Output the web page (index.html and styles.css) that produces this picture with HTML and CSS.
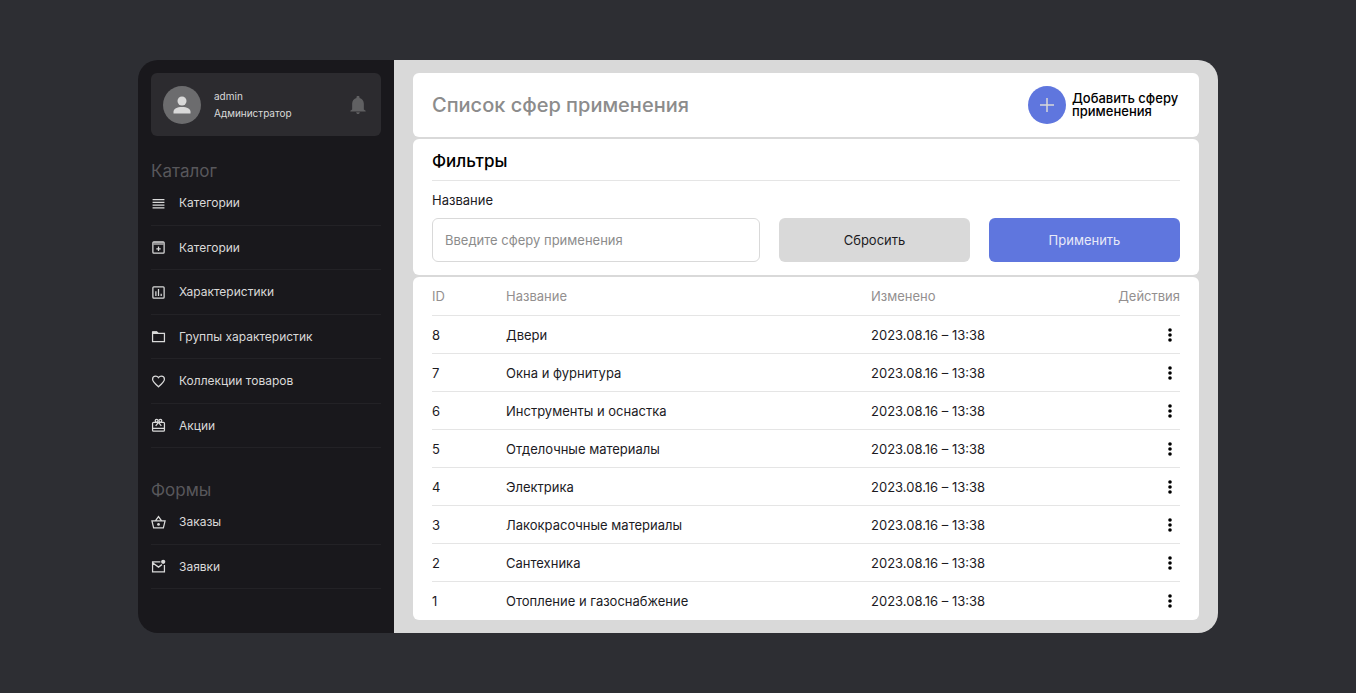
FILE: index.html
```html
<!DOCTYPE html>
<html lang="ru">
<head>
<meta charset="utf-8">
<meta name="viewport" content="width=device-width, initial-scale=1">
<title>Список сфер применения</title>
<link rel="stylesheet" href="styles.css">
</head>
<body>
<div class="app">
  <aside class="sidebar">
    <div class="profile">
      <span class="avatar">
        <svg class="avatar-icon" viewBox="0 0 18 18" aria-hidden="true"><circle cx="9" cy="5" r="4.500"/><path d="M.5 17.500v-1.700C.5 12.800 4 11 9 11s8.500 1.800 8.500 4.800v1.700z"/></svg>
      </span>
      <div class="profile-text">
        <span>admin</span>
        <span>Администратор</span>
      </div>
      <button class="bell" type="button" aria-label="Уведомления">
        <svg class="bell-icon" viewBox="3 2 18 20" aria-hidden="true"><path d="M12 22c1.100 0 2-.9 2-2h-4c0 1.100.9 2 2 2zm6.500-5v-6.500c0-3.300-2-5.800-4.800-6.400V3.500a1.700 1.700 0 0 0-3.400 0v.6C7.500 4.700 5.500 7.200 5.500 10.500V17L3.500 18.500V19.200h17v-.7z"/></svg>
      </button>
    </div>
    <nav class="nav">
      <section class="group">
        <h2 class="group-title">Каталог</h2>
        <ul class="group-list">
          <li class="nav-item"><a class="nav-link" href="#categories"><svg class="icon" viewBox="0 0 24 24" aria-hidden="true"><path d="M2.500 5.600h19M2.500 10h19M2.500 14.400h19M2.500 18.800h19"/></svg>Категории</a></li>
          <li class="nav-item"><a class="nav-link" href="#archive"><svg class="icon" viewBox="0 0 24 24" aria-hidden="true"><rect x="3" y="3" width="18" height="18" rx="1.500"/><path class="solid" d="M4 3h16v5H4z" opacity=".6"/><path d="M12 10.500v7M8.500 14h7"/></svg>Категории</a></li>
          <li class="nav-item"><a class="nav-link" href="#features"><svg class="icon" viewBox="0 0 24 24" aria-hidden="true"><rect x="3" y="3" width="18" height="18" rx="1.500"/><path d="M7.800 10v7.500M12 6.500v11M16.300 14v3.500"/></svg>Характеристики</a></li>
          <li class="nav-item"><a class="nav-link" href="#feature-groups"><svg class="icon" viewBox="0 0 24 24" aria-hidden="true"><path d="M3 4.500h6l2.500 2.500H21.500v13h-19v-15z"/><path class="solid" d="M2 4h7.500l2.500 2.500V8H2z"/></svg>Группы характеристик</a></li>
          <li class="nav-item"><a class="nav-link" href="#collections"><svg class="icon" viewBox="0 0 24 24" aria-hidden="true"><path d="M12 20.500C6 15.200 2.500 12.200 2.500 8.400A5 5 0 0 1 7.500 3.500c1.800 0 3.500.9 4.500 2.400 1-1.500 2.700-2.400 4.500-2.400a5 5 0 0 1 5 4.900c0 3.800-3.500 6.800-9.500 12.100z"/></svg>Коллекции товаров</a></li>
          <li class="nav-item"><a class="nav-link" href="#promo"><svg class="icon" viewBox="0 0 24 24" aria-hidden="true"><rect x="2.500" y="7" width="19" height="14" rx="1.500"/><path d="M2.500 16.500h19M12 7l-4.500 5.500M12 7l4.500 5.500"/><circle cx="9" cy="4.500" r="2.300"/><circle cx="15" cy="4.500" r="2.300"/></svg>Акции</a></li>
        </ul>
      </section>
      <section class="group">
        <h2 class="group-title group-title-next">Формы</h2>
        <ul class="group-list">
          <li class="nav-item"><a class="nav-link" href="#orders"><svg class="icon" viewBox="0 0 24 24" aria-hidden="true"><path d="M1.500 9.500h21L19.800 20.500H4.200zM7 9.500l5-7 5 7"/><circle class="solid" cx="12" cy="15" r="2.200"/></svg>Заказы</a></li>
          <li class="nav-item"><a class="nav-link" href="#requests"><svg class="icon" viewBox="0 0 24 24" aria-hidden="true"><path d="M15 4.500H2.500v16h19V9.500M3 6.500l9 6.500 5.500-4"/><circle class="solid" cx="19.500" cy="4.500" r="3.400"/></svg>Заявки</a></li>
        </ul>
      </section>
    </nav>
  </aside>
  <main class="main">
    <header class="card page-head">
      <h1 class="page-title">Список сфер применения</h1>
      <button class="add" type="button">
        <span class="add-circle"><svg class="add-icon" viewBox="0 0 16 16" aria-hidden="true"><path d="M8 1v14M1 8h14"/></svg></span>
        <span class="add-label">Добавить сферу применения</span>
      </button>
    </header>
    <form class="card filters">
      <h2 class="filters-title">Фильтры</h2>
      <label class="field-label" for="scope">Название</label>
      <div class="filters-row">
        <input class="field" id="scope" type="text" placeholder="Введите сферу применения">
        <button class="btn btn-reset" type="reset">Сбросить</button>
        <button class="btn btn-apply" type="submit">Применить</button>
      </div>
    </form>
    <section class="card list">
      <table class="table">
        <thead>
          <tr><th class="col-id">ID</th><th class="col-name">Название</th><th>Изменено</th><th class="col-actions">Действия</th></tr>
        </thead>
        <tbody>
          <tr><td>8</td><td>Двери</td><td>2023.08.16 – 13:38</td><td class="col-actions"><button class="more" type="button" aria-label="Действия"><svg class="dots" viewBox="0 0 4 14" aria-hidden="true"><circle cx="2" cy="2" r="1.800"/><circle cx="2" cy="7" r="1.800"/><circle cx="2" cy="12" r="1.800"/></svg></button></td></tr>
          <tr><td>7</td><td>Окна и фурнитура</td><td>2023.08.16 – 13:38</td><td class="col-actions"><button class="more" type="button" aria-label="Действия"><svg class="dots" viewBox="0 0 4 14" aria-hidden="true"><circle cx="2" cy="2" r="1.800"/><circle cx="2" cy="7" r="1.800"/><circle cx="2" cy="12" r="1.800"/></svg></button></td></tr>
          <tr><td>6</td><td>Инструменты и оснастка</td><td>2023.08.16 – 13:38</td><td class="col-actions"><button class="more" type="button" aria-label="Действия"><svg class="dots" viewBox="0 0 4 14" aria-hidden="true"><circle cx="2" cy="2" r="1.800"/><circle cx="2" cy="7" r="1.800"/><circle cx="2" cy="12" r="1.800"/></svg></button></td></tr>
          <tr><td>5</td><td>Отделочные материалы</td><td>2023.08.16 – 13:38</td><td class="col-actions"><button class="more" type="button" aria-label="Действия"><svg class="dots" viewBox="0 0 4 14" aria-hidden="true"><circle cx="2" cy="2" r="1.800"/><circle cx="2" cy="7" r="1.800"/><circle cx="2" cy="12" r="1.800"/></svg></button></td></tr>
          <tr><td>4</td><td>Электрика</td><td>2023.08.16 – 13:38</td><td class="col-actions"><button class="more" type="button" aria-label="Действия"><svg class="dots" viewBox="0 0 4 14" aria-hidden="true"><circle cx="2" cy="2" r="1.800"/><circle cx="2" cy="7" r="1.800"/><circle cx="2" cy="12" r="1.800"/></svg></button></td></tr>
          <tr><td>3</td><td>Лакокрасочные материалы</td><td>2023.08.16 – 13:38</td><td class="col-actions"><button class="more" type="button" aria-label="Действия"><svg class="dots" viewBox="0 0 4 14" aria-hidden="true"><circle cx="2" cy="2" r="1.800"/><circle cx="2" cy="7" r="1.800"/><circle cx="2" cy="12" r="1.800"/></svg></button></td></tr>
          <tr><td>2</td><td>Сантехника</td><td>2023.08.16 – 13:38</td><td class="col-actions"><button class="more" type="button" aria-label="Действия"><svg class="dots" viewBox="0 0 4 14" aria-hidden="true"><circle cx="2" cy="2" r="1.800"/><circle cx="2" cy="7" r="1.800"/><circle cx="2" cy="12" r="1.800"/></svg></button></td></tr>
          <tr><td>1</td><td>Отопление и газоснабжение</td><td>2023.08.16 – 13:38</td><td class="col-actions"><button class="more" type="button" aria-label="Действия"><svg class="dots" viewBox="0 0 4 14" aria-hidden="true"><circle cx="2" cy="2" r="1.800"/><circle cx="2" cy="7" r="1.800"/><circle cx="2" cy="12" r="1.800"/></svg></button></td></tr>
        </tbody>
      </table>
    </section>
  </main>
</div>
</body>
</html>
```
FILE: styles.css
```css
* { box-sizing: border-box; }

body {
  margin: 0;
  padding: 60px 138px;
  background: #2d2e33;
  color: #1c1b1f;
  font: 400 13px/20px Inter, "Noto Sans", sans-serif;
}

h1, h2, ul { margin: 0; padding: 0; }
button, input { font: inherit; }
button { border: 0; padding: 0; background: none; cursor: pointer; }

.app { display: flex; border-radius: 20px; overflow: hidden; }

.sidebar {
  display: flex;
  flex-direction: column;
  flex: 0 0 256px;
  padding: 13px 13px 44px;
  background: #19181c;
  color: #d9d9d9;
}

.profile {
  display: flex;
  align-items: center;
  height: 63px;
  padding: 0 14px 0 12px;
  border-radius: 6px;
  background: #2c2b2f;
}
.avatar {
  display: grid;
  place-items: center;
  width: 38px;
  height: 38px;
  border-radius: 50%;
  background: #6c6c6e;
}
.avatar-icon { width: 18px; height: 18px; fill: #d9d9d9; }
.profile-text {
  display: flex;
  flex-direction: column;
  flex: 1;
  margin-left: 13px;
  font-size: 10px;
  line-height: 17px;
}
.bell { display: flex; }
.bell-icon { width: 18px; height: 18px; fill: #606062; }

.nav { display: flex; flex-direction: column; flex: 1; }
.group, .group-list { display: contents; }
.group-title {
  margin-top: 25px;
  color: #58575b;
  font-size: 17px;
  font-weight: 400;
  line-height: 20px;
}
.group-title-next { margin-top: 32px; }
.nav-item {
  display: flex;
  flex: 1 1 44px;
  border-bottom: 1px solid #232226;
}
.nav-link {
  display: flex;
  align-items: center;
  flex: 1;
  gap: 13px;
  padding-top: 1px;
  color: inherit;
  font-size: 12px;
  text-decoration: none;
}
.icon { width: 15px; height: 15px; fill: none; stroke: #d9d9d9; stroke-width: 2; }
.icon .solid { fill: #d9d9d9; stroke: none; }

.main {
  display: flex;
  flex-direction: column;
  flex: 1;
  gap: 2px;
  min-width: 0;
  padding: 13px 19px;
  background: #d9d9d9;
}
.card { padding: 0 19px; border-radius: 6px; background: #fff; }

.page-head {
  display: flex;
  align-items: center;
  justify-content: space-between;
  padding-block: 13px;
}
.page-title { color: #8c8c8c; font-size: 20px; font-weight: 500; line-height: 24px; }
.add { display: flex; align-items: center; gap: 6px; color: #000; text-align: left; }
.add-circle {
  display: grid;
  place-items: center;
  width: 38px;
  height: 38px;
  border-radius: 50%;
  background: #5f76de;
}
.add-icon { width: 16px; height: 16px; stroke: #d9d9d9; stroke-width: 1.500; }
.add-label { width: 108px; font-weight: 500; line-height: 13px; }

.filters { padding-block: 12px 13px; }
.filters-title {
  padding-bottom: 9px;
  border-bottom: 1px solid #e5e5e5;
  color: #000;
  font-size: 17px;
  font-weight: 500;
  line-height: 20px;
}
.field-label { display: block; padding: 9px 0 8px; }
.filters-row { display: grid; grid-template-columns: 328fr 191fr 191fr; gap: 19px; }
.field {
  min-width: 0;
  height: 44px;
  padding: 0 12px;
  border: 1px solid #d9d9d9;
  border-radius: 6px;
  background: #fff;
  color: inherit;
}
.field::placeholder { color: #8c8c8c; opacity: 1; }
.btn { height: 44px; border-radius: 6px; }
.btn-reset { background: #d9d9d9; color: #1c1b1f; }
.btn-apply { background: #5f76de; color: #e8eaf8; }

.table { width: 100%; border-collapse: separate; border-spacing: 0; table-layout: fixed; }
th, td { height: 38px; padding: 0; border-bottom: 1px solid #e5e5e5; text-align: left; }
th { height: 39px; color: #938f8f; font-weight: 400; }
tbody tr:last-child td { border-bottom: 0; }
.col-id { width: 74px; }
.col-name { width: 365px; }
.table .col-actions { text-align: right; }
.more { display: inline-block; padding: 3px 8px; vertical-align: top; }
.dots { display: block; width: 4px; height: 14px; fill: #000; }
```
